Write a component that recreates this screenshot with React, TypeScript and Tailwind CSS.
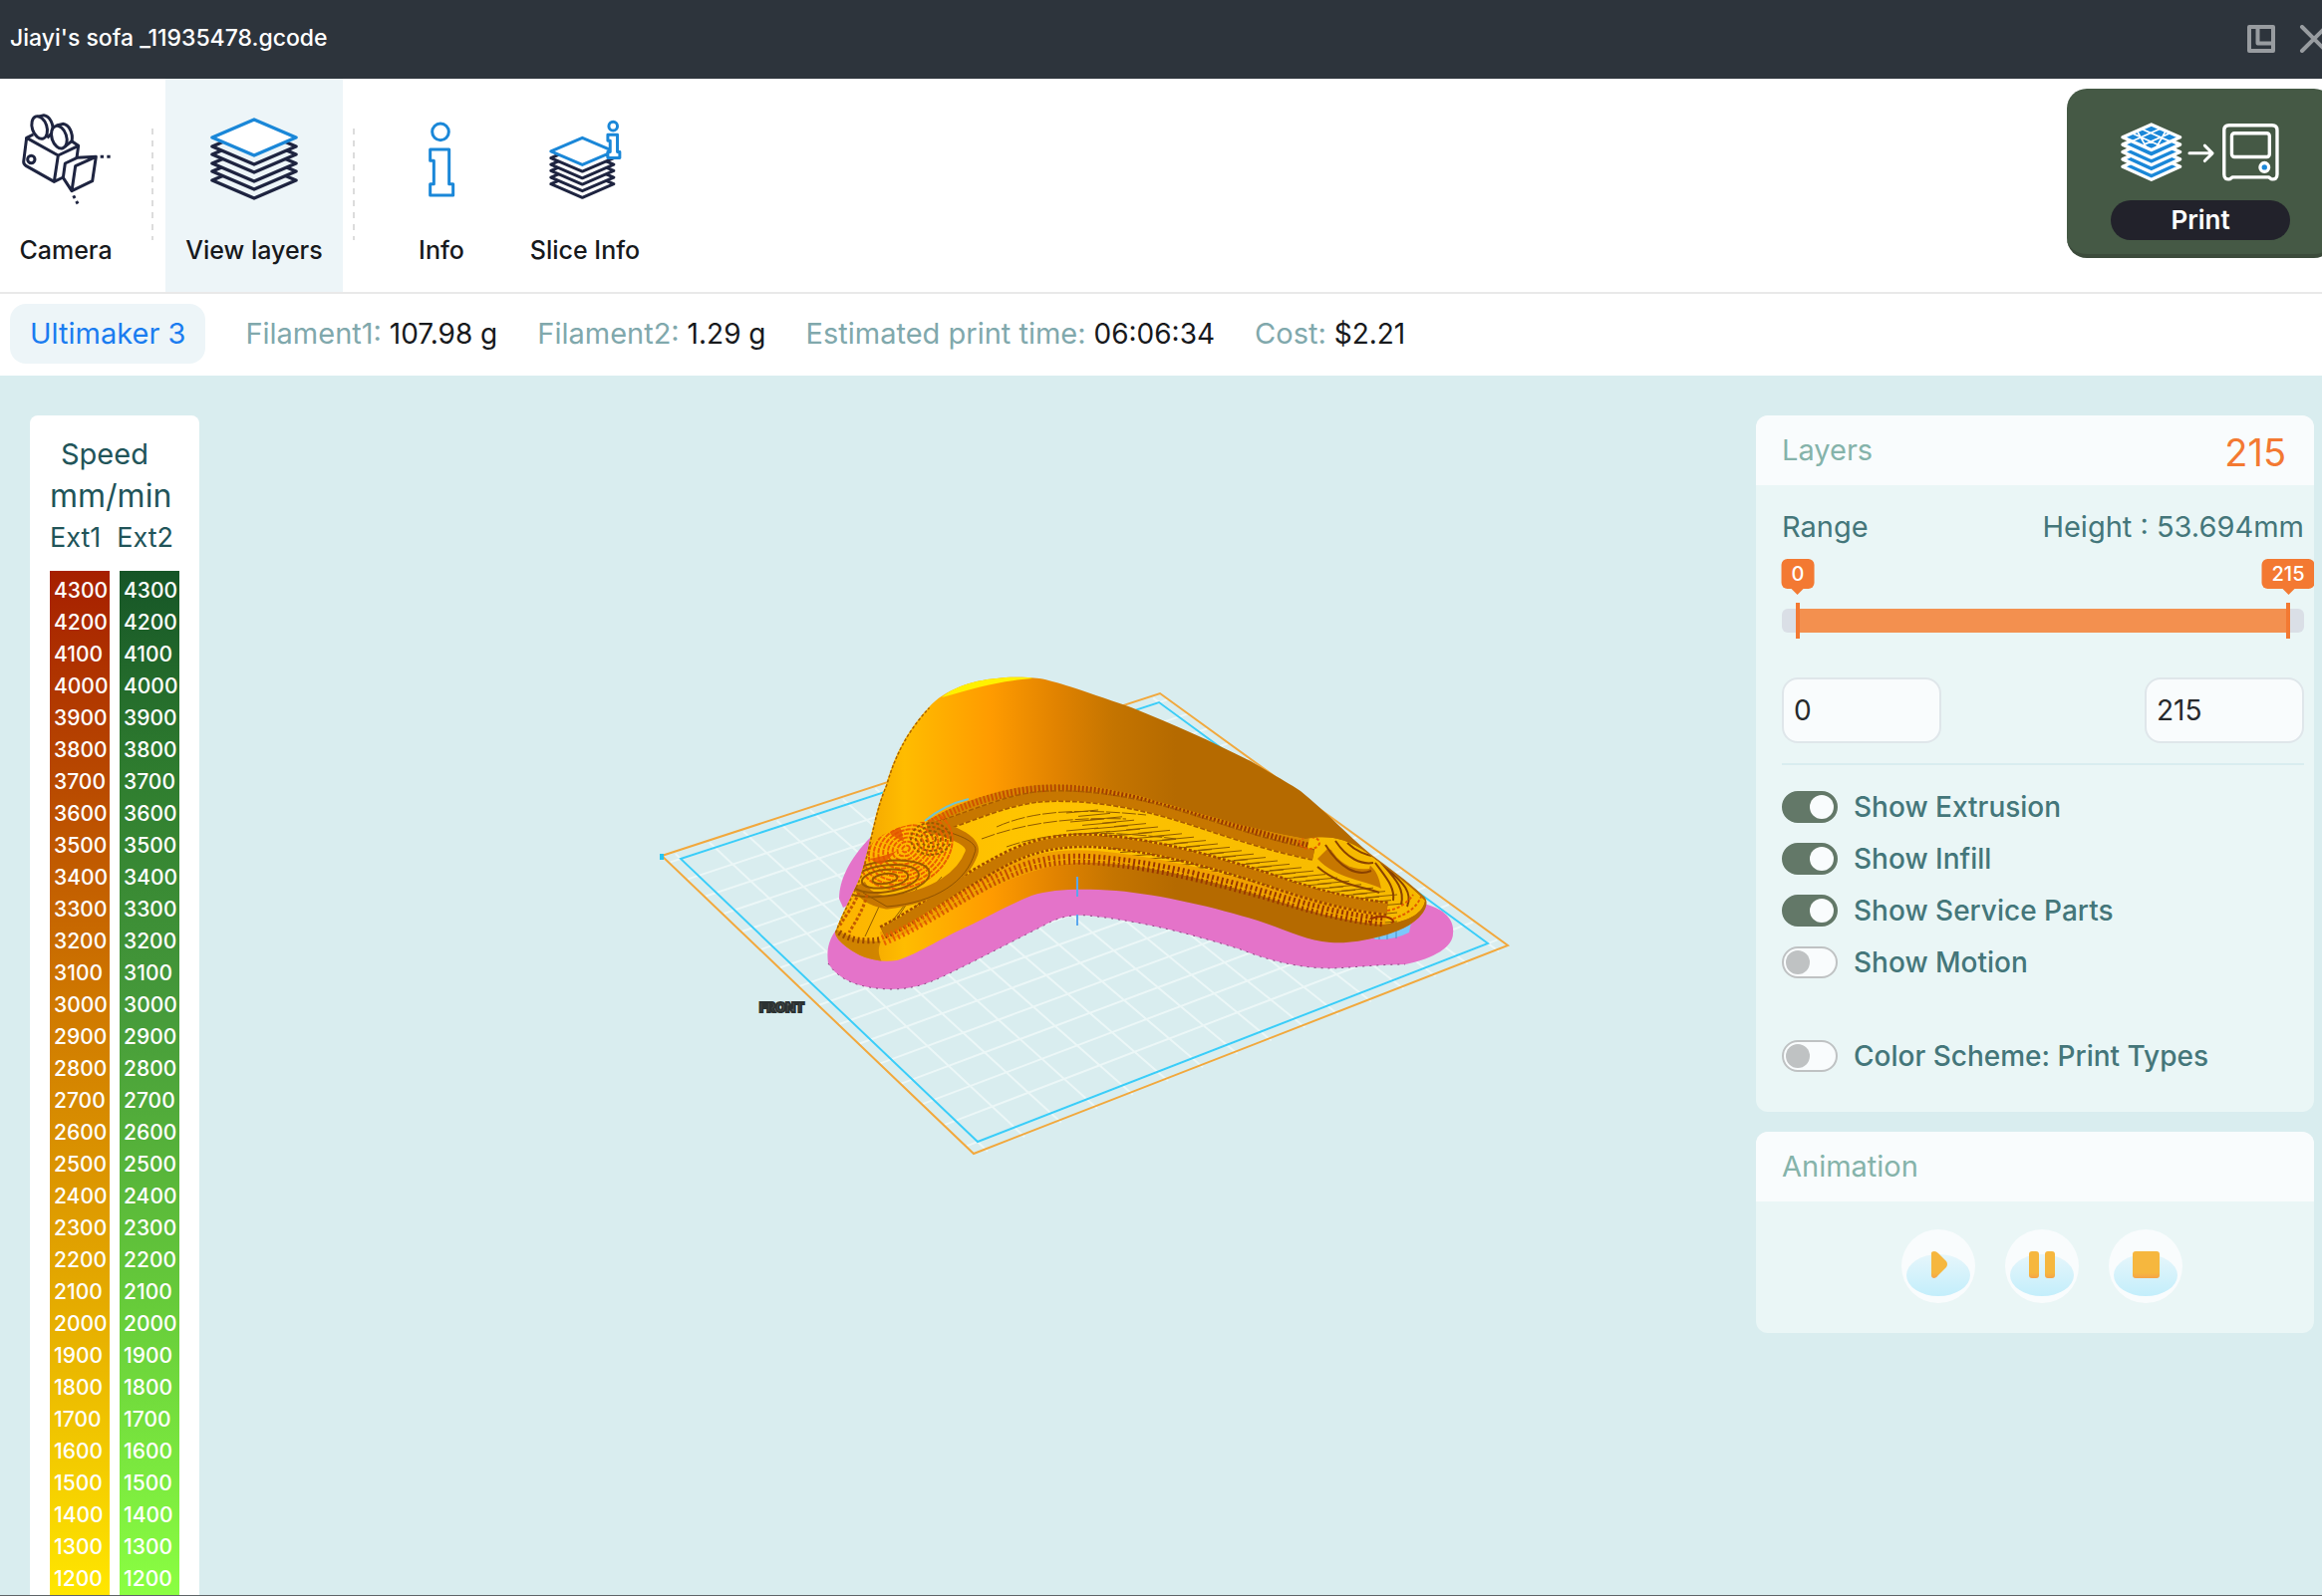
import { useState } from "react";
import type { ReactNode } from "react";

const MAX_LAYER = 215;
const SPEEDS = Array.from({ length: 32 }, (_, i) => 4300 - i * 100);

const STATS = [
  { label: "Filament1:", value: "107.98 g" },
  { label: "Filament2:", value: "1.29 g" },
  { label: "Estimated print time:", value: "06:06:34" },
  { label: "Cost:", value: "$2.21" },
];

/* ---------- icons ---------- */

function CameraIcon() {
  return (
    <svg viewBox="60 30 276 294" className="h-[98px] w-[92px]" fill="none" stroke="#1e2440" strokeWidth="9" strokeLinejoin="round" aria-hidden="true">
      <path d="M112 49 L132 44 C150 46 163 72 158 96 L142 112" />
      <path d="M170 75 L189 70 C208 72 221 98 216 122 L196 138" />
      <ellipse cx="119" cy="81" rx="22" ry="35" transform="rotate(-18 119 81)" fill="#fff" />
      <ellipse cx="178" cy="110" rx="22" ry="35" transform="rotate(-18 178 110)" fill="#fff" />
      <path d="M100 102 L80 112 L175 165 L236 136 L216 122 M80 112 L71 184 Q71 192 78 196 L163 244 L175 165 M236 136 L231 172 M163 244 L190 231" />
      <circle cx="94" cy="177" r="11" />
      <path d="M289 169 L232 172 L196 189 L190 232 L216 272 L278 242 Z M289 169 L227 197 L216 272" />
      <path d="M302 169 H336" strokeDasharray="10 10" />
      <path d="M221 286 L237 316" strokeDasharray="9 10" />
    </svg>
  );
}

function LayersIcon() {
  return (
    <svg viewBox="0 0 88 84" className="h-[84px] w-[88px]" strokeWidth="3.5" strokeLinejoin="round" aria-hidden="true">
      {[63, 54, 46, 37, 29].map((y) => (
        <path key={y} d={`M2 ${y} L44 ${y - 18} L86 ${y} L44 ${y + 18} Z`} fill="#edf5f8" stroke="#1e2440" />
      ))}
      <path d="M2 20 L44 2 L86 20 L44 38 Z" fill="#fff" stroke="#1a87d8" />
    </svg>
  );
}

function InfoIcon() {
  return (
    <svg viewBox="90 60 84 234" className="h-[78px] w-[28px]" fill="none" stroke="#1a87d8" strokeWidth="9" strokeLinejoin="round" aria-hidden="true">
      <circle cx="129" cy="94" r="25" />
      <path d="M98 147 H155 V251 H167 V285 H98 V251 H109 V181 H98 Z" />
    </svg>
  );
}

function SliceInfoIcon() {
  return (
    <svg viewBox="452 62 222 244" className="h-[81px] w-[74px]" strokeWidth="9" strokeLinejoin="round" aria-hidden="true">
      {[257, 237, 217, 198, 178].map((y) => (
        <path key={y} d={`M460 ${y} L555 ${y - 41} L650 ${y} L555 ${y + 41} Z`} fill="#fff" stroke="#1e2440" />
      ))}
      <path d="M460 158 L555 117 L650 158 L555 199 Z" fill="#fff" stroke="#1a87d8" />
      <circle cx="648" cy="82" r="13" fill="#fff" stroke="#1a87d8" />
      <path d="M632 108 H661 V160 H668 V178 H632 V160 H639 V126 H632 Z" fill="#fff" stroke="#1a87d8" />
    </svg>
  );
}

function SendToPrinterIcon() {
  return (
    <svg viewBox="294 366 478 182" className="h-[61px] w-[160px]" fill="none" stroke="#fff" strokeLinejoin="round" strokeLinecap="round" aria-hidden="true">
      <g strokeWidth="10">
        {[501, 479, 457, 435].map((y) => (
          <path key={y} d={`M300 ${y} L386 ${y - 39} L472 ${y} L386 ${y + 39} Z`} fill="#1a87d8" />
        ))}
        <path d="M300 413 L386 375 L472 413 L386 451 Z" fill="#1a87d8" />
        <path strokeWidth="5" d="M328 401 L414 439 M357 388 L443 426 M328 425 L414 387 M357 438 L443 400 M343 394 L372 445 M400 445 L429 394" />
      </g>
      <path strokeWidth="9" d="M500 461 H568 M546 438 L569 461 L546 484" />
      <path strokeWidth="10" d="M622 538 Q604 542 604 524 V392 Q604 377 619 377 H748 Q763 377 763 392 V524 Q763 542 745 538 L738 533 H629 Z" />
      <rect strokeWidth="10" x="627" y="401" width="113" height="71" rx="8" />
      <circle cx="725" cy="503" r="13" fill="#1a87d8" strokeWidth="10" />
    </svg>
  );
}

/* ---------- print bed preview ---------- */

/** Projects a bed coordinate (0..1 on both axes) onto the view. */
function project(u: number, v: number): [number, number] {
  const g = 0.0798;
  const h = -0.114;
  const w = 1 + g * u + h * v;
  const x = ((1163 * (1 + g) - 683) * u + (981 * (1 + h) - 683) * v + 683) / w;
  const y = ((705 * (1 + g) - 862) * u + (1146 * (1 + h) - 862) * v + 862) / w;
  return [x, y];
}

function bedGrid(cells: number) {
  const parts: string[] = [];
  for (let i = 0; i <= cells; i++) {
    const t = i / cells;
    const [a, b] = project(t, -0.02);
    const [c, d] = project(t, 1.03);
    const [e, f] = project(-0.02, t);
    const [p, q] = project(1.02, t);
    parts.push(`M${a} ${b}L${c} ${d}M${e} ${f}L${p} ${q}`);
  }
  return parts.join("");
}

const BODY =
  "M838 936 C844 918 856 898 864 878 C874 845 878 812 889 788 C899 752 915 728 932 710 C948 692 975 683 1000 681 C1016 679 1030 680 1043 681 C1060 684 1080 691 1135 710 C1180 728 1215 744 1255 764 C1278 778 1292 785 1305 794 C1332 816 1352 838 1375 857 C1395 872 1412 884 1428 899 Q1435 905 1428 916 C1418 930 1400 936 1385 940 C1365 945 1352 947 1335 946 C1310 944 1292 934 1262 924 C1220 911 1165 898 1120 894 C1085 892 1058 892 1035 899 C1010 909 985 924 960 935 C938 946 915 960 900 964 C878 967 862 960 850 951 Q838 942 838 936 Z";

const SEAT =
  "M838 930 C850 905 862 880 872 850 C890 830 912 828 930 824 C960 806 1000 792 1040 788 C1080 785 1120 792 1160 804 C1210 818 1260 834 1310 842 C1330 838 1350 840 1372 856 C1392 872 1415 888 1430 904 C1428 918 1410 926 1388 928 C1350 926 1300 910 1262 898 C1200 880 1150 868 1100 866 C1060 864 1030 875 1000 889 C960 907 930 928 898 942 C878 946 852 942 838 930 Z";

const BACK_RIM = "M932 826 C960 808 1000 795 1040 792 C1085 788 1120 794 1160 806 C1210 820 1260 838 1312 850";
const BACK_BAND = "M934 832 C970 822 1000 806 1040 800 C1090 796 1140 806 1180 818 C1220 830 1260 846 1318 858";
const FRONT_BAND = "M886 936 C925 916 960 888 1000 867 C1030 850 1060 842 1100 844 C1160 848 1220 866 1270 882 C1310 896 1350 908 1392 912";
const FRONT_EDGE = "M886 944 C930 926 965 898 1005 880 C1035 866 1060 860 1100 863 C1160 868 1220 884 1270 898 C1310 910 1350 922 1390 925";

function BedPreview() {
  return (
    <svg viewBox="650 660 880 520" className="h-[520px] w-[880px] shrink-0" fill="none" role="img" aria-label="Sliced model on the print bed">
      <defs>
        <linearGradient id="shell" gradientUnits="userSpaceOnUse" x1="870" y1="0" x2="1180" y2="0">
          <stop offset="0" stopColor="#f5a800" />
          <stop offset="0.12" stopColor="#ffbc00" />
          <stop offset="0.4" stopColor="#ff9b00" />
          <stop offset="0.62" stopColor="#e08200" />
          <stop offset="0.8" stopColor="#c47400" />
          <stop offset="1" stopColor="#b56a00" />
        </linearGradient>
        <linearGradient id="seat" gradientUnits="userSpaceOnUse" x1="840" y1="0" x2="1430" y2="0">
          <stop offset="0" stopColor="#fdb400" />
          <stop offset="0.3" stopColor="#ffc400" />
          <stop offset="1" stopColor="#f6b900" />
        </linearGradient>
        <linearGradient id="rim" gradientUnits="userSpaceOnUse" x1="900" y1="0" x2="1140" y2="0">
          <stop offset="0" stopColor="#e86000" />
          <stop offset="1" stopColor="#983600" />
        </linearGradient>
        <clipPath id="bodyClip">
          <path d={BODY} />
        </clipPath>
        <clipPath id="seatClip">
          <path d={SEAT} />
        </clipPath>
      </defs>

      <path d={bedGrid(15)} stroke="#f1f9f9" strokeWidth="2" strokeOpacity="0.75" />
      <path d="M664 859 L1164 696 L1513 949 L977 1158 Z" stroke="#f2a83c" strokeWidth="2" />
      <path d="M683 862 L1163 705 L1493 947 L981 1146 Z" stroke="#3bcdf8" strokeWidth="2" />
      <rect x="662" y="857" width="4" height="6" fill="#25c4f2" />

      {/* brim */}
      <path d="M874 840 C852 862 842 884 842 902 L846 911 L870 900 Z" fill="#e473c9" />
      <path
        d="M840 932 C829 946 830 958 831 967 C842 984 862 992 893 993 C925 993 942 982 975 966 L1055 925 C1068 919 1080 918 1092 919 C1150 925 1200 939 1245 953 C1280 967 1310 972 1337 972 C1360 971 1385 968 1410 968 C1440 962 1458 950 1458 937 C1460 922 1447 912 1432 908 L1300 860 L1080 880 Z"
        fill="#e473c9"
      />
      <path d="M831 967 C842 984 862 992 893 993 C925 993 942 982 975 966 L1055 925 C1068 919 1080 918 1092 919 C1150 925 1200 939 1245 953 C1280 967 1310 972 1337 972 C1360 971 1385 968 1410 968" stroke="#8b4480" strokeWidth="1" strokeDasharray="2 5" />
      <path d="M1374 938 L1416 926 L1414 936 Q1398 944 1380 943 Z" fill="#7cc8fb" />
      <path d="M1384 940 V943 M1392 936 V943 M1401 934 V942" stroke="#4d8fc4" strokeWidth="1" />

      {/* backrest and side wall */}
      <path d={BODY} fill="url(#shell)" />
      <g clipPath="url(#bodyClip)">
        <path d="M945 700 C960 687 985 679 1030 677 L1036 681 C1000 684 980 690 945 700 Z" fill="#fff100" />
        <g clipPath="url(#seatClip)">
          <path d={SEAT} fill="url(#seat)" />
          <g stroke="#8f5a00" strokeWidth="1">
            <path d="M985 842 C1030 825 1080 820 1130 822 M1000 830 C1040 812 1090 812 1150 818 M1010 850 C1050 836 1100 832 1180 842" strokeDasharray="14 2" />
            {Array.from({ length: 26 }, (_, i) => {
              const x = 1070 + i * 12;
              const y = 816 + i * 3.4;
              return <path key={i} d={`M${x} ${y} l32 -3 M${x + 4} ${y + 9} l34 -3 M${x} ${y + 18} l32 -3 M${x + 6} ${y + 26} l26 -2`} />;
            })}
            <path d="M882 910 L868 940 M908 908 L888 934 M945 880 L915 915 M920 892 L900 922" />
          </g>
          <path d={BACK_RIM} stroke="#d88800" strokeWidth="16" />
          <path d={BACK_RIM} stroke="url(#rim)" strokeWidth="9" strokeDasharray="2 2" />
          <path d={BACK_BAND} stroke="#a85c00" strokeWidth="12" strokeDasharray="5 2" />
          <path d={BACK_BAND} stroke="#c77700" strokeWidth="9" />
          <path d={FRONT_EDGE} stroke="#f0a000" strokeWidth="18" />
          <path d={FRONT_BAND} stroke="#a04800" strokeWidth="15" strokeDasharray="3 2" />
          <path d={FRONT_BAND} stroke="#c77700" strokeWidth="10" />
          {/* left armrest contours */}
          <path d="M930 829 C962 835 978 846 975 856 C966 880 940 900 890 906 C872 903 866 896 862 888" stroke="#c77700" strokeWidth="13" />
          <path d="M940 832 C972 840 982 848 978 856 C970 884 940 906 890 910 L866 896" stroke="#8f5200" strokeWidth="1" />
          <g stroke="#ea5f00" strokeWidth="2">
            {[4, 9, 14, 19, 24, 29, 34, 39, 44, 49].map((r) => (
              <ellipse key={r} cx="909" cy="852" rx={r} ry={r * 0.76} transform="rotate(-28 909 852)" strokeDasharray="5 1" />
            ))}
          </g>
          <g stroke="#9a5a00" strokeWidth="2">
            {[7, 13, 19, 25].map((r) => (
              <ellipse key={r} cx="888" cy="882" rx={r * 1.8} ry={r * 0.7} transform="rotate(-8 888 882)" />
            ))}
            {[5, 10, 15, 20].map((r) => (
              <ellipse key={r} cx="934" cy="842" rx={r} ry={r * 0.8} strokeDasharray="3 2" />
            ))}
          </g>
          <path d="M872 862 Q886 860 900 854 Q892 862 884 868 Z M893 837 L903 828 L907 845 Z" fill="#e25300" fillOpacity="0.8" />
          <path d="M862 896 C856 910 848 920 842 930 M870 898 C866 914 858 926 852 936" stroke="#c45a00" strokeWidth="3" strokeDasharray="3 2" />
          {/* right armrest contours */}
          <path d="M1322 862 C1340 882 1372 884 1386 892 C1382 868 1372 862 1332 852 Z" fill="#c77700" />
          <path d="M1334 850 C1344 868 1358 874 1374 872 L1378 858 Z" fill="#f6b900" />
          <g stroke="#8a4200" strokeWidth="2">
            <path d="M1322 870 C1345 890 1370 890 1384 896 M1330 848 C1345 872 1362 880 1376 874 M1340 844 C1352 862 1366 868 1378 866 M1380 866 C1390 880 1400 890 1398 904 M1386 866 C1400 882 1410 892 1406 908 M1392 872 C1408 886 1418 896 1412 910 M1352 846 C1362 856 1372 858 1380 860" />
          </g>
          <g stroke="#e05a00" strokeWidth="2">
            <ellipse cx="1314" cy="846" rx="10" ry="6" strokeDasharray="3 2" />
            <ellipse cx="1386" cy="925" rx="12" ry="5" stroke="#a03400" />
            <path d="M1398 922 C1412 918 1422 910 1426 900 M1392 914 C1406 912 1414 904 1418 898" strokeDasharray="3 2" />
          </g>
        </g>
        <path d={FRONT_EDGE} stroke="url(#rim)" strokeWidth="11" strokeDasharray="2 3" />
        <path d={FRONT_EDGE} stroke="#f2ae00" strokeWidth="1" strokeDasharray="9 4" />
        <path d="M836 930 C850 942 866 945 884 945 C880 954 882 960 886 968 L840 964 Z" fill="#b86a00" fillOpacity="0.6" />
        <path d="M842 936 C854 944 868 946 884 943" stroke="#9a4800" strokeWidth="6" strokeDasharray="2 3" />
        <path d="M838 936 C844 918 856 898 864 878 C874 845 878 812 889 788 C899 752 915 728 932 710" stroke="#a86400" strokeWidth="3" strokeDasharray="3 2" />
      </g>
      <path d="M928 824 C940 814 955 806 972 802" stroke="#72c4cf" strokeWidth="2" />
      <path d="M1081 880 V900 M1081 918 V929" stroke="#5aa6ee" strokeWidth="2" />
      <text x="762" y="1016" fontFamily="Inter, sans-serif" fontSize="13" fontWeight="900" fill="#555c5c" stroke="#2c3232" strokeWidth="2">
        FRONT
      </text>
    </svg>
  );
}

/* ---------- building blocks ---------- */

function ToolButton({ label, active, className, children }: { label: string; active?: boolean; className: string; children: ReactNode }) {
  return (
    <button
      type="button"
      aria-pressed={active}
      className={`flex shrink-0 flex-col items-center justify-between pt-[31px] pb-6 text-[25px] leading-9 font-medium text-[#17191c] ${active ? "bg-[#edf5f8]" : ""} ${className}`}
    >
      <span className="flex h-[100px] items-center">{children}</span>
      {label}
    </button>
  );
}

function Divider({ className }: { className: string }) {
  return (
    <span
      aria-hidden="true"
      className={`mt-[50px] h-28 w-[2px] shrink-0 bg-[repeating-linear-gradient(to_bottom,#dcdcdc_0_6px,transparent_6px_12px)] ${className}`}
    />
  );
}

function SpeedColumn({ className }: { className: string }) {
  return (
    <ol className={`w-[60px] pt-1 pl-1 text-[21px] leading-8 font-medium text-white ${className}`}>
      {SPEEDS.map((s) => (
        <li key={s}>{s}</li>
      ))}
    </ol>
  );
}

function Toggle({ label, initial }: { label: string; initial: boolean }) {
  const [on, setOn] = useState(initial);
  return (
    <label className="flex h-8 cursor-pointer items-center gap-4 text-[28px] leading-8 font-medium text-[#44767a]">
      <input type="checkbox" role="switch" checked={on} onChange={(e) => setOn(e.target.checked)} className="peer sr-only" />
      <span className="flex h-8 w-14 shrink-0 items-center rounded-full border-2 border-[#bfc2c3] bg-[#f9fcfd] px-[2px] peer-checked:justify-end peer-checked:border-[#637868] peer-checked:bg-[#637868] peer-checked:[&>span]:bg-[#f9fcfd]">
        <span className="size-6 rounded-full bg-[#bfc2c3]" />
      </span>
      {label}
    </label>
  );
}

function Tag({ value }: { value: number }) {
  return (
    <span className="absolute bottom-full left-1/2 mb-2 flex -translate-x-1/2 flex-col items-center">
      <span className="rounded-md bg-[#f37932] px-[10px] text-xl leading-[30px] font-medium text-white">{value}</span>
      <span className="size-0 border-x-[6px] border-t-[6px] border-x-transparent border-t-[#f37932]" />
    </span>
  );
}

function RangeSlider({ low, high, onLow, onHigh }: { low: number; high: number; onLow: (n: number) => void; onHigh: (n: number) => void }) {
  const from = (low / MAX_LAYER) * 100;
  const to = (high / MAX_LAYER) * 100;
  const thumbInput =
    "pointer-events-none absolute inset-0 w-full cursor-pointer opacity-0 [&::-webkit-slider-thumb]:pointer-events-auto";
  return (
    <div className="relative mt-[62px] h-6 rounded-md bg-[#dadfe6] px-4">
      <div className="relative h-6">
        <div className="absolute inset-y-0 bg-[#f3904f]" style={{ left: `${from}%`, right: `${100 - to}%` }} />
        {[
          { id: "low", value: low, at: from },
          { id: "high", value: high, at: to },
        ].map((h) => (
          <div key={h.id} className="absolute -inset-y-[6px] w-1 -translate-x-1/2 bg-[#f37932]" style={{ left: `${h.at}%` }}>
            <Tag value={h.value} />
          </div>
        ))}
      </div>
      <input aria-label="First layer" type="range" min={0} max={MAX_LAYER} value={low} onChange={(e) => onLow(Math.min(+e.target.value, high))} className={thumbInput} />
      <input aria-label="Last layer" type="range" min={0} max={MAX_LAYER} value={high} onChange={(e) => onHigh(Math.max(+e.target.value, low))} className={thumbInput} />
    </div>
  );
}

function PlayerButton({ label, children }: { label: string; children: ReactNode }) {
  return (
    <button type="button" aria-label={label} className="size-[74px] rounded-full bg-[#f9fcfd]">
      <svg viewBox="0 0 74 74" className="size-full" aria-hidden="true">
        <defs>
          <linearGradient id="pool" x1="0" y1="0" x2="0" y2="1">
            <stop offset="0" stopColor="#e6f6fb" />
            <stop offset="1" stopColor="#c3eefb" />
          </linearGradient>
          <linearGradient id="amber" x1="0" y1="0" x2="0" y2="1">
            <stop offset="0.8" stopColor="#f6b73e" />
            <stop offset="1" stopColor="#f5a348" />
          </linearGradient>
        </defs>
        <ellipse cx="37" cy="46" rx="32" ry="21" fill="url(#pool)" />
        <g fill="url(#amber)">{children}</g>
      </svg>
    </button>
  );
}

/* ---------- page ---------- */

export default function App() {
  const [low, setLow] = useState(0);
  const [high, setHigh] = useState(MAX_LAYER);
  const numberInput =
    "h-[66px] w-40 rounded-2xl border-2 border-[#dfe6ea] bg-[#f9fcfd] px-[10px] text-[28px] text-[#26292c] outline-none";

  return (
    <div className="flex h-screen flex-col overflow-hidden border-b border-[#5f6468] bg-[#d9edef] font-['Inter',sans-serif]">
      <header className="flex h-[79px] shrink-0 items-center justify-between bg-[#2d343c] pb-[2px] pl-[10px] text-white">
        <h1 className="text-[23px] font-medium">Jiayi's sofa _11935478.gcode</h1>
        <div className="-mr-[7px] flex items-center gap-6 text-[#989ca0]">
          <button type="button" aria-label="Restore window">
            <svg viewBox="0 0 28 28" className="size-7" fill="none" stroke="currentColor" strokeWidth="4" strokeLinejoin="round" aria-hidden="true">
              <path d="M2 2 H26 V26 H2 Z M10.500 2 V18.500 H26" />
            </svg>
          </button>
          <button type="button" aria-label="Close">
            <svg viewBox="0 0 30 28" className="h-7 w-[30px]" fill="none" stroke="currentColor" strokeWidth="4" strokeLinecap="round" aria-hidden="true">
              <path d="M3 2 L27 26 M27 2 L3 26" />
            </svg>
          </button>
        </div>
      </header>

      <div className="flex h-[216px] shrink-0 justify-between border-b-2 border-[#e9e9e9] bg-white">
        <nav className="flex" aria-label="Tools">
          <ToolButton label="Camera" className="w-[132px]">
            <CameraIcon />
          </ToolButton>
          <Divider className="ml-5" />
          <ToolButton label="View layers" active className="ml-3 w-[178px]">
            <LayersIcon />
          </ToolButton>
          <Divider className="ml-[10px]" />
          <ToolButton label="Info" className="ml-[15px] w-36">
            <InfoIcon />
          </ToolButton>
          <ToolButton label="Slice Info" className="w-36">
            <SliceInfoIcon />
          </ToolButton>
        </nav>
        <button
          type="button"
          className="mt-[10px] -mr-3 flex h-[170px] w-[268px] shrink-0 flex-col items-center justify-end gap-[18px] rounded-[20px] border-b-4 border-[#3c4b3b] bg-[#455945] pb-[14px]"
        >
          <SendToPrinterIcon />
          <span className="w-[180px] rounded-full bg-[#22222b] text-center text-[26px] leading-10 font-semibold text-white">Print</span>
        </button>
      </div>

      <section aria-label="Job summary" className="flex h-[82px] shrink-0 items-center gap-10 bg-white pb-[2px] pl-[10px] text-[28px]">
        <a href="#printer" className="rounded-2xl bg-[#edf5f8] px-5 text-[29px] leading-[60px] text-[#1a7cf0]">
          Ultimaker 3
        </a>
        {STATS.map((s) => (
          <p key={s.label} className="text-[#17191c]">
            <span className="text-[29px] text-[#80a8ac]">{s.label}</span> {s.value}
          </p>
        ))}
      </section>

      <main className="flex min-h-0 flex-1 pt-10 pr-2 pl-[30px]">
        <aside className="w-[170px] shrink-0 rounded-t-lg bg-white px-5 pt-[18px]">
          <h2 className="text-[29px] leading-[42px] text-[#215459]">
            <span className="block pl-[11px]">Speed</span>
            <span className="block text-[32px]">mm/min</span>
          </h2>
          <div className="mb-3 flex justify-between text-[27px] leading-[42px] text-[#215459]">
            <span>Ext1</span>
            <span className="pr-[6px]">Ext2</span>
          </div>
          <div className="flex gap-[10px]">
            <SpeedColumn className="bg-[linear-gradient(#a61f00,#b84800_20%,#cf7800_42%,#e5ac00_72%,#ffe600)]" />
            <SpeedColumn className="bg-[linear-gradient(#165527,#2f7d2f_20%,#45993a_42%,#67cc3a_72%,#8bff42)]" />
          </div>
        </aside>

        <div className="flex min-w-0 flex-1 justify-center pt-[243px] pl-[218px]">
          <BedPreview />
        </div>

        <aside className="flex w-[560px] shrink-0 flex-col gap-5">
          <section className="overflow-hidden rounded-xl bg-[#eaf6f6]">
            <header className="flex h-[70px] items-center justify-between bg-[#f9fcfd] pr-7 pl-[26px]">
              <h2 className="text-[29px] text-[#85b3aa]">Layers</h2>
              <output className="pt-1 text-[38px] leading-none text-[#f37932]">{high}</output>
            </header>
            <div className="pt-[22px] pr-[10px] pb-10 pl-[26px]">
              <div className="flex justify-between text-[29px] leading-10 text-[#44767a]">
                <h3>Range</h3>
                <p>Height : 53.694mm</p>
              </div>
              <RangeSlider low={low} high={high} onLow={setLow} onHigh={setHigh} />
              <div className="mt-[45px] flex justify-between">
                <input aria-label="From layer" inputMode="numeric" className={numberInput} value={low} onChange={(e) => setLow(Math.min(+e.target.value || 0, high))} />
                <input aria-label="To layer" inputMode="numeric" className={numberInput} value={high} onChange={(e) => setHigh(Math.min(+e.target.value || 0, MAX_LAYER))} />
              </div>
              <hr className="mt-5 mb-[26px] border-t-2 border-[#d9edef]" />
              <div className="relative flex flex-col gap-5">
                <Toggle label="Show Extrusion" initial={true} />
                <Toggle label="Show Infill" initial={true} />
                <Toggle label="Show Service Parts" initial={true} />
                <Toggle label="Show Motion" initial={false} />
              </div>
              <div className="relative mt-[62px]">
                <Toggle label="Color Scheme: Print Types" initial={false} />
              </div>
            </div>
          </section>

          <section className="overflow-hidden rounded-xl bg-[#eaf6f6]">
            <h2 className="bg-[#f9fcfd] pl-[26px] text-[29px] leading-[70px] text-[#85b3aa]">Animation</h2>
            <div className="flex justify-center gap-[30px] pt-7 pr-3 pb-[30px] pl-[26px]">
              <PlayerButton label="Play">
                <path d="M30 24 Q30 22 33 22 Q35 22 37 24 L45 32 Q47 35 45 38 L37 46 Q35 49 33 49 Q30 49 30 46 Z" />
              </PlayerButton>
              <PlayerButton label="Pause">
                <rect x="24" y="22" width="10" height="27" rx="3" />
                <rect x="40" y="22" width="10" height="27" rx="3" />
              </PlayerButton>
              <PlayerButton label="Stop">
                <rect x="24" y="22" width="27" height="27" rx="3" />
              </PlayerButton>
            </div>
          </section>
        </aside>
      </main>
    </div>
  );
}
